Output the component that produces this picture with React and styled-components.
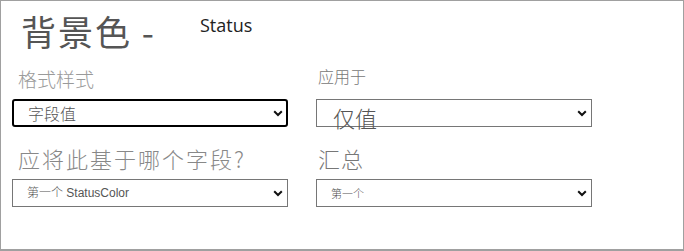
import React from 'react'
import styled, { createGlobalStyle } from 'styled-components'

const Global = createGlobalStyle`
  html, body { margin: 0; padding: 0; background: #fff; }
  * { box-sizing: border-box; }
`

const Frame = styled.div`
  width: 684px;
  height: 251px;
  border: 1px solid #a0a0a0;
  border-bottom-width: 2px;
  background: #fff;
  padding: 0 0 0 11px;
  font-family: "Open Sans", "Noto Sans CJK SC", sans-serif;
`

const TitleRow = styled.div`
  display: flex;
  align-items: flex-start;
  height: 58px;
  padding: 8px 0 0 9px;
`

const Title = styled.h1`
  margin: 0;
  font-family: "Noto Sans CJK SC", sans-serif;
  font-size: 35px;
  font-weight: 400;
  color: #555;
  letter-spacing: 2px;
  line-height: 44px;
`

const Subtitle = styled.span`
  margin: 4px 0 0 44px;
  font-family: "Open Sans", "Noto Sans CJK SC", sans-serif;
  font-size: 18px;
  line-height: 24px;
  color: #222;
`

const Grid = styled.div`
  display: grid;
  grid-template-columns: 276px 276px;
  column-gap: 28px;
`

const Field = styled.div`
  display: flex;
  flex-direction: column;
`

const Label = styled.div`
  font-family: "Noto Sans CJK SC", sans-serif;
  font-size: ${p => p.size}px;
  color: ${p => p.color};
  letter-spacing: ${p => p.spacing || 0}px;
  height: ${p => p.h}px;
  padding: ${p => p.top}px 0 0 ${p => p.indent}px;
  line-height: 1.2;
  font-weight: 300;
  white-space: nowrap;
`

const SelectBox = styled.div`
  position: relative;
  display: flex;
  align-items: center;
  justify-content: space-between;
  height: 28px;
  border: ${p => (p.focused ? '2px solid #000' : '1px solid #767676')};
  border-radius: ${p => (p.focused ? '3px' : '0')};
  padding: 0 ${p => (p.focused ? 3 : 4)}px 0 ${p => p.pad}px;
`

const Value = styled.span`
  font-family: ${p => (p.latin ? '"Liberation Sans", "Noto Sans CJK SC", sans-serif' : '"Noto Sans CJK SC", sans-serif')};
  font-size: ${p => p.size}px;
  color: #555;
  font-weight: 300;
  white-space: nowrap;
  line-height: 1;
  transform: translateY(${p => p.shift || 0}px);
`

const Chevron = () => (
  <svg width="10" height="7" viewBox="0 0 10 7">
    <path d="M1.2 1.2 L5 5 L8.8 1.2" fill="none" stroke="#111" strokeWidth="2" />
  </svg>
)

export default function App() {
  return (
    <>
      <Global />
      <Frame>
        <TitleRow>
          <Title>背景色 -</Title>
          <Subtitle>Status</Subtitle>
        </TitleRow>
        <Grid>
          <Field>
            <Label size={19} color="#9a9a9a" h={40} top={9} indent={6}>格式样式</Label>
            <SelectBox focused pad={14}>
              <Value size={16}>字段值</Value>
              <Chevron />
            </SelectBox>
          </Field>
          <Field>
            <Label size={16} color="#777" h={40} top={8} indent={2}>应用于</Label>
            <SelectBox pad={16}>
              <Value size={22} shift={4}>仅值</Value>
              <Chevron />
            </SelectBox>
          </Field>
          <Field>
            <Label size={22} color="#888" spacing={2} h={52} top={18} indent={6}>应将此基于哪个字段?</Label>
            <SelectBox pad={14}>
              <Value size={12} latin>第一个 StatusColor</Value>
              <Chevron />
            </SelectBox>
          </Field>
          <Field>
            <Label size={22} color="#777" spacing={1} h={52} top={18} indent={2}>汇总</Label>
            <SelectBox pad={14}>
              <Value size={11}>第一个</Value>
              <Chevron />
            </SelectBox>
          </Field>
        </Grid>
      </Frame>
    </>
  )
}
